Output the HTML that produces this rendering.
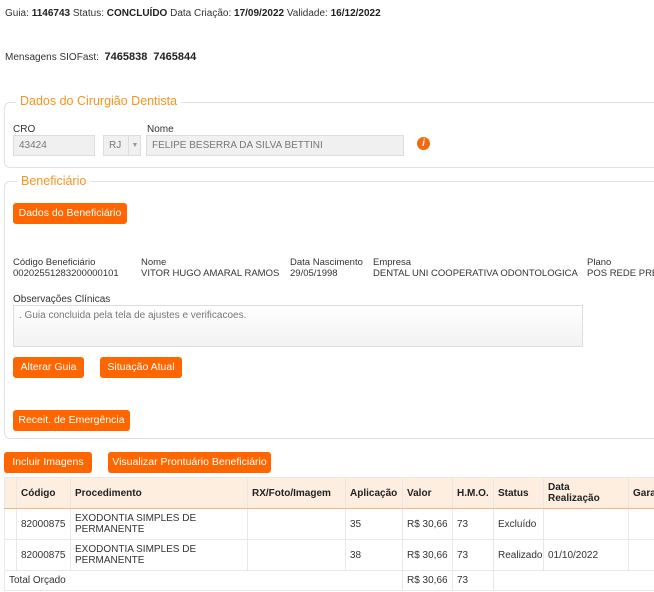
<!DOCTYPE html>
<html><head><meta charset="utf-8"><style>
*{margin:0;padding:0;box-sizing:border-box}
body{width:654px;height:592px;overflow:hidden;background:#fff;font-family:"Liberation Sans",sans-serif;font-size:10px;color:#333;position:relative}
.a{position:absolute;white-space:nowrap}
b{color:#222}
.fs{position:absolute;border:1px solid #e2e2e2;border-right:none;border-radius:6px 0 0 6px}
.lg{position:absolute;background:#fff;color:#f7931e;font-size:12.5px;padding:0 4px}
.btn{position:absolute;background:#ff6600;color:#fff;border-radius:3px;font-size:10.5px;height:21px;line-height:21px;text-align:center;white-space:nowrap}
.inp{position:absolute;background:#f0f0f0;border:1px solid #ddd;color:#777;font-size:10px;line-height:19px;padding-left:5px;height:21px}
table{position:absolute;left:4px;top:477px;border-collapse:collapse;width:664px;table-layout:fixed;font-size:10px}
td,th{border:1px solid #e8e8e8;padding:0 4px;text-align:left;vertical-align:middle;white-space:nowrap;overflow:hidden}
th{background:#fdeee0;font-weight:bold;height:31px;color:#222;border-bottom:1px solid #f7b27e}
td{height:31px;color:#333;line-height:11px}
tr.t td{height:20px}
.ben{font-size:9.5px;line-height:11px}
</style></head><body>
<div class="a" style="left:5px;top:8px">Guia: <b>1146743</b> Status: <b>CONCLUÍDO</b> Data Criação: <b>17/09/2022</b> Validade: <b>16/12/2022</b></div>
<div class="a" style="left:5px;top:51px">Mensagens SIOFast: &nbsp;<b style="font-size:11px">7465838 &nbsp;7465844</b></div>

<div class="fs" style="left:4px;top:102px;width:660px;height:66px"></div>
<div class="lg" style="left:16px;top:94px">Dados do Cirurgião Dentista</div>
<div class="a" style="left:13px;top:124px">CRO</div>
<div class="a" style="left:147px;top:124px">Nome</div>
<div class="inp" style="left:13px;top:135px;width:82px">43424</div>
<div class="inp" style="left:103px;top:135px;width:38px">RJ</div>
<div class="a" style="left:128px;top:135px;width:13px;height:21px;border-left:1px solid #ddd;color:#999;font-size:7px;text-align:center;line-height:21px">▼</div>
<div class="inp" style="left:146px;top:135px;width:258px">FELIPE BESERRA DA SILVA BETTINI</div>
<div class="a" style="left:417px;top:137px;width:13px;height:13px;border-radius:50%;background:#f26a10;color:#fff;font-size:10px;font-weight:bold;font-style:italic;text-align:center;line-height:13px">i</div>

<div class="fs" style="left:4px;top:181px;width:660px;height:258px"></div>
<div class="lg" style="left:17px;top:174px">Beneficiário</div>
<div class="btn" style="left:13px;top:203px;width:114px">Dados do Beneficiário</div>
<div class="a ben" style="left:13px;top:257px">Código Beneficiário<br>00202551283200000101</div>
<div class="a ben" style="left:141px;top:257px">Nome<br>VITOR HUGO AMARAL RAMOS</div>
<div class="a ben" style="left:290px;top:257px">Data Nascimento<br>29/05/1998</div>
<div class="a ben" style="left:373px;top:257px">Empresa<br>DENTAL UNI COOPERATIVA ODONTOLOGICA</div>
<div class="a ben" style="left:587px;top:257px">Plano<br>POS REDE PRESTADORA</div>
<div class="a" style="left:13px;top:294px">Observações Clínicas</div>
<div class="inp" style="left:13px;top:305px;width:570px;height:42px;line-height:20px;background:linear-gradient(#fff,#f2f2f2)">. Guia concluida pela tela de ajustes e verificacoes.</div>
<div class="btn" style="left:13px;top:357px;width:71px">Alterar Guia</div>
<div class="btn" style="left:100px;top:357px;width:82px">Situação Atual</div>
<div class="btn" style="left:13px;top:410px;width:117px">Receit. de Emergência</div>

<div class="btn" style="left:4px;top:452px;width:88px">Incluir Imagens</div>
<div class="btn" style="left:108px;top:452px;width:163px">Visualizar Prontuário Beneficiário</div>

<table>
<colgroup><col style="width:12px"><col style="width:54px"><col style="width:177px"><col style="width:98px"><col style="width:57px"><col style="width:50px"><col style="width:41px"><col style="width:50px"><col style="width:85px"><col style="width:40px"></colgroup>
<tr><th></th><th>Código</th><th>Procedimento</th><th>RX/Foto/Imagem</th><th>Aplicação</th><th>Valor</th><th>H.M.O.</th><th>Status</th><th style="line-height:11px">Data<br>Realização</th><th>Garantia</th></tr>
<tr><td></td><td>82000875</td><td>EXODONTIA SIMPLES DE<br>PERMANENTE</td><td></td><td>35</td><td>R$ 30,66</td><td>73</td><td>Excluído</td><td></td><td></td></tr>
<tr><td></td><td>82000875</td><td>EXODONTIA SIMPLES DE<br>PERMANENTE</td><td></td><td>38</td><td>R$ 30,66</td><td>73</td><td>Realizado</td><td>01/10/2022</td><td></td></tr>
<tr class="t"><td colspan="5">Total Orçado</td><td>R$ 30,66</td><td>73</td><td colspan="3"></td></tr>
</table>
</body></html>
